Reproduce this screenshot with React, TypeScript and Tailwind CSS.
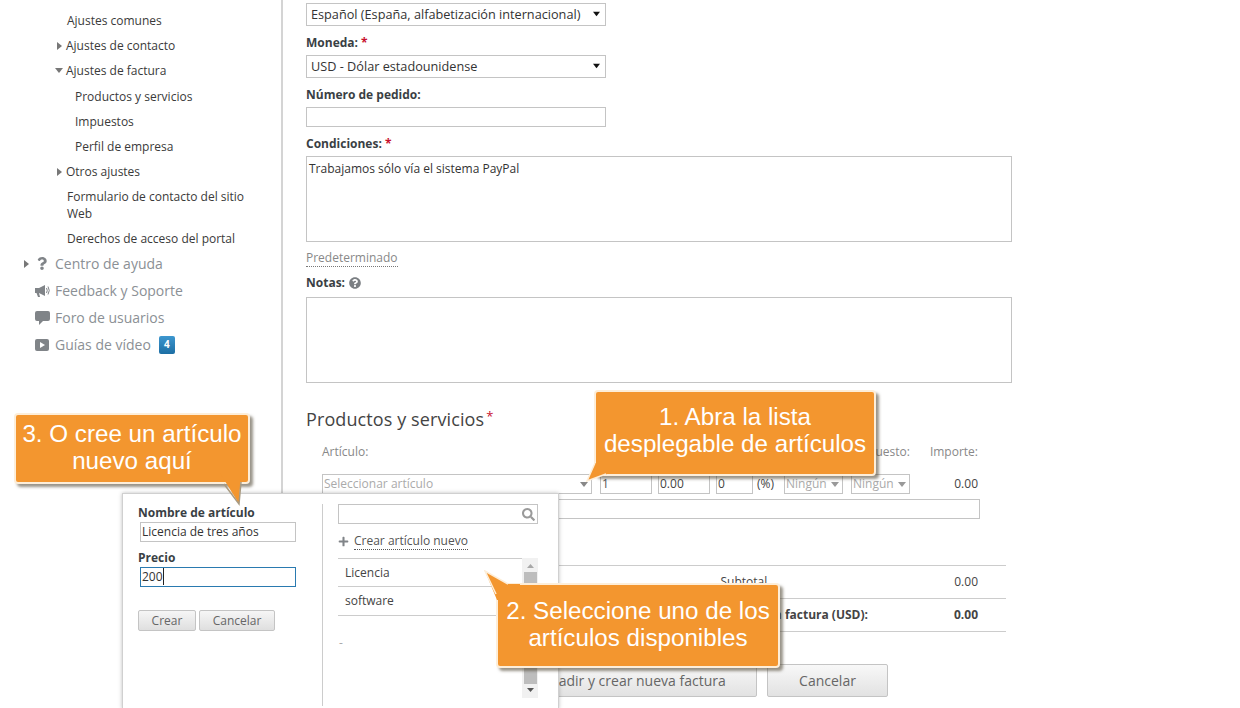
import type { ReactNode } from 'react'
import { FaPlus, FaQuestion, FaQuestionCircle, FaSearch } from 'react-icons/fa'

const font = { fontFamily: '"Open Sans", sans-serif' }

const SUB_ROW = 'h-[25px] leading-[25px] text-[12px] text-[#3a3a3a]'
const MAIN_ROW = 'flex items-center h-[27px] text-[14px] text-[#8b9095]'
const INPUT = 'border border-[#c4c4c4] bg-white'
const LABEL = 'text-[12px] font-bold text-[#3a3f44] leading-[17px]'

function ArrowRight({ color = '#777' }: { color?: string }) {
  return (
    <svg width="5" height="8" viewBox="0 0 5 8" className="shrink-0">
      <path d="M0 0 L5 4 L0 8 Z" fill={color} />
    </svg>
  )
}

function ArrowDown({ color = '#777', w = 8, h = 5 }: { color?: string; w?: number; h?: number }) {
  return (
    <svg width={w} height={h} viewBox="0 0 8 5" className="shrink-0">
      <path d="M0 0 L8 0 L4 5 Z" fill={color} />
    </svg>
  )
}

function Sidebar() {
  return (
    <div className="w-[283px] shrink-0 h-full border-r-2 border-[#d4d4d4] pt-[8px]">
      <div className={`${SUB_ROW} pl-[67px]`}>Ajustes comunes</div>
      <div className={`${SUB_ROW} pl-[57px] flex items-center gap-[4px]`}>
        <ArrowRight />
        <span>Ajustes de contacto</span>
      </div>
      <div className={`${SUB_ROW} pl-[55px] flex items-center gap-[3px]`}>
        <ArrowDown />
        <span>Ajustes de factura</span>
      </div>
      <div className={`${SUB_ROW} pl-[75px] mt-[1px]`}>Productos y servicios</div>
      <div className={`${SUB_ROW} pl-[75px]`}>Impuestos</div>
      <div className={`${SUB_ROW} pl-[75px]`}>Perfil de empresa</div>
      <div className={`${SUB_ROW} pl-[57px] flex items-center gap-[4px]`}>
        <ArrowRight />
        <span>Otros ajustes</span>
      </div>
      <div className="pl-[67px] pr-[30px] pt-[4px] pb-[4px] text-[12px] leading-[17px] text-[#3a3a3a]">
        Formulario de contacto del sitio Web
      </div>
      <div className={`${SUB_ROW} pl-[67px]`}>Derechos de acceso del portal</div>
      <div className="-mt-[1px]">
        <div className={`${MAIN_ROW} pl-[24px]`}>
          <ArrowRight />
          <span className="w-[10px] ml-[8px] flex justify-center"><FaQuestion size={13} color="#808488" /></span>
          <span className="ml-[8px]">Centro de ayuda</span>
        </div>
        <div className={`${MAIN_ROW} pl-[35px]`}>
          <svg width="15" height="14" viewBox="0 0 15 14" className="shrink-0">
            <path d="M0 4 H4 L10 1 V12 L4 9 L5 13 H3 L1.5 9 H0 Z" fill="#808488" />
            <path d="M11.5 4 Q13 6.5 11.5 9 M13 2.5 Q15.5 6.5 13 10.5" fill="none" stroke="#808488" />
          </svg>
          <span className="ml-[5px]">Feedback y Soporte</span>
        </div>
        <div className={`${MAIN_ROW} pl-[35px]`}>
          <svg width="15" height="14" viewBox="0 0 15 14" className="shrink-0">
            <path d="M2 0 H13 Q15 0 15 2 V8 Q15 10 13 10 H8 L4 14 V10 H2 Q0 10 0 8 V2 Q0 0 2 0 Z" fill="#808488" />
          </svg>
          <span className="ml-[5px]">Foro de usuarios</span>
        </div>
        <div className={`${MAIN_ROW} pl-[35px]`}>
          <span className="w-[14px] h-[12px] rounded-[2px] bg-[#808488] flex items-center justify-center">
            <svg width="5" height="6" viewBox="0 0 5 6"><path d="M0 0 L5 3 L0 6 Z" fill="#fff" /></svg>
          </span>
          <span className="ml-[6px]">Guías de vídeo</span>
          <span className="ml-[8px] w-[16px] h-[18px] rounded-[2px] bg-gradient-to-b from-[#3d97cf] to-[#1c6ea4] text-white text-[10px] font-bold flex items-center justify-center">4</span>
        </div>
      </div>
    </div>
  )
}

function SelectBox({ children }: { children: ReactNode }) {
  return (
    <div className={`${INPUT} w-[300px] h-[23px] flex items-center justify-between pl-[4px] pr-[4px] pt-[1px] text-[12.7px] text-[#333]`}>
      <span>{children}</span>
      <span className="mr-[1px] mb-[3px]"><ArrowDown color="#111" w={7} h={6} /></span>
    </div>
  )
}

function TaxSelect() {
  return (
    <div className={`${INPUT} w-[59px] h-[20px] flex items-center pl-[1px] gap-[4px] text-[12px] text-[#aaa]`}>
      Ningún
      <ArrowDown color="#999" />
    </div>
  )
}

function Form() {
  return (
    <div className="pl-[23px] flex-1">
      <div className="pt-[3px]">
        <SelectBox>Español (España, alfabetización internacional)</SelectBox>
      </div>
      <div className={`${LABEL} mt-[8px] mb-[4px]`}>Moneda: <span className="text-[#c8102e]">*</span></div>
      <SelectBox>USD - Dólar estadounidense</SelectBox>
      <div className={`${LABEL} mt-[8px] mb-[4px]`}>Número de pedido:</div>
      <div className={`${INPUT} w-[300px] h-[20px]`} />
      <div className={`${LABEL} mt-[8px] mb-[4px]`}>Condiciones: <span className="text-[#c8102e]">*</span></div>
      <div className={`${INPUT} w-[706px] h-[86px] px-[2px] py-[3px] text-[12px] leading-[17px] text-[#333]`}>
        Trabajamos sólo vía el sistema PayPal
      </div>
      <div className="mt-[7px] h-[17px] leading-[17px] text-[12px] text-[#888]">
        <span className="border-b border-dotted border-[#777]">Predeterminado</span>
      </div>
      <div className={`${LABEL} mt-[8px] mb-[6px] flex items-center gap-[4px]`}>
        Notas: <FaQuestionCircle size={12} color="#7b7f83" />
      </div>
      <div className={`${INPUT} w-[706px] h-[86px]`} />

      <div className="mt-[23px] h-[26px] leading-[26px] text-[18px] text-[#444] tracking-[0.1px]">
        Productos y servicios<span className="text-[#c8102e] text-[13px] align-top ml-[2px] leading-[20px]">*</span>
      </div>

      <div className="ml-[16px] w-[658px] mt-[11px]">
        <div className="flex h-[17px] leading-[17px] text-[12px] text-[#888] pr-[2px]">
          <span>Artículo:</span>
          <span className="ml-auto mr-[20px]">Impuesto:</span>
          <span>Importe:</span>
        </div>
        <div className="flex items-center mt-[14px] text-[12px] text-[#444] pr-[2px]">
          <div className={`${INPUT} w-[270px] h-[20px] flex items-center justify-between pl-[1px] pr-[3px] text-[#aaa]`}>
            Seleccionar artículo
            <ArrowDown color="#888" />
          </div>
          <div className={`${INPUT} w-[52px] h-[20px] ml-[8px] pl-[1px] leading-[18px] text-[#555]`}>1</div>
          <div className={`${INPUT} w-[52px] h-[20px] ml-[6px] pl-[1px] leading-[18px]`}>0.00</div>
          <div className={`${INPUT} w-[37px] h-[20px] ml-[6px] pl-[1px] leading-[18px]`}>0</div>
          <span className="ml-[4px] w-[27px]">(%)</span>
          <TaxSelect />
          <div className="ml-[8px]"><TaxSelect /></div>
          <span className="ml-auto">0.00</span>
        </div>
        <div className={`${INPUT} w-[658px] h-[20px] mt-[5px]`} />
      </div>

      <div className="w-[700px] mt-[46px] text-[12px] text-[#444]">
        <div className="h-[33px] border-t border-[#ccc] flex items-center justify-end pr-[28px]">
          <span className="mr-[187px]">Subtotal</span>
          <span>0.00</span>
        </div>
        <div className="h-[34px] border-t border-b border-[#ccc] flex items-center justify-end pr-[28px] font-bold">
          <span className="mr-[86px]">Total de la factura (USD):</span>
          <span>0.00</span>
        </div>
      </div>

      <div className="flex mt-[32px] ml-[204px] gap-[10px]">
        <div className="w-[247px] h-[33px] border border-[#c4c4c4] rounded-[2px] bg-gradient-to-b from-[#f8f8f8] to-[#e2e2e2] flex items-center justify-center text-[14px] text-[#666]">
          Añadir y crear nueva factura
        </div>
        <div className="w-[121px] h-[33px] border border-[#c4c4c4] rounded-[2px] bg-gradient-to-b from-[#f8f8f8] to-[#e2e2e2] flex items-center justify-center text-[14px] text-[#666]">
          Cancelar
        </div>
      </div>
    </div>
  )
}

function ItemPopup() {
  return (
    <div className="absolute left-[122px] top-[493px] w-[437px] h-[216px] bg-white border border-[#d0d0d0] shadow-[0_0_4px_rgba(0,0,0,0.25)] flex">
      <div className="w-[199px] h-full pl-[15px] pt-[10px] shrink-0">
        <div className={LABEL}>Nombre de artículo</div>
        <div className={`${INPUT} ml-[2px] mt-[1px] w-[156px] h-[20px] pl-[1px] leading-[17px] text-[12px] text-[#333]`}>Licencia de tres años</div>
        <div className={`${LABEL} mt-[7px]`}>Precio</div>
        <div className="ml-[2px] mt-[1px] w-[156px] h-[20px] border border-[#2a7ab0] pl-[1px] leading-[18px] text-[12px] text-[#333]">
          200<span className="border-l border-[#222]" />
        </div>
        <div className="flex gap-[3px] mt-[23px]">
          <div className="w-[58px] h-[21px] border border-[#c4c4c4] rounded-[2px] bg-gradient-to-b from-[#f6f6f6] to-[#dfdfdf] text-[12px] text-[#666] flex items-center justify-center">Crear</div>
          <div className="w-[76px] h-[21px] border border-[#c4c4c4] rounded-[2px] bg-gradient-to-b from-[#f6f6f6] to-[#dfdfdf] text-[12px] text-[#666] flex items-center justify-center">Cancelar</div>
        </div>
      </div>
      <div className="w-[216px] h-[202px] mt-[10px] border-l border-[#ccc] pl-[15px]">
        <div className={`${INPUT} w-[200px] h-[20px] flex items-center justify-end pr-[2px]`}>
          <FaSearch size={13} color="#9a9a9a" />
        </div>
        <div className="flex items-center mt-[7px] h-[20px] text-[12px] text-[#555]">
          <FaPlus size={11} color="#808488" />
          <span className="ml-[5px] border-b border-dotted border-[#555] leading-[16px]">Crear artículo nuevo</span>
        </div>
        <div className="flex mt-[7px] w-[200px]">
          <div className="flex-1 text-[12px] text-[#444]">
            <div className="h-[29px] leading-[27px] border-y border-[#ccc] pl-[7px]">Licencia</div>
            <div className="h-[29px] leading-[27px] border-b border-[#ccc] pl-[7px]">software</div>
            <div className="pl-[1px] mt-[20px] text-[#aaa] leading-[14px]">-</div>
          </div>
          <div className="w-[16px] h-[140px] bg-[#f1f1f1] flex flex-col items-center justify-between py-[6px]">
            <svg width="7" height="4" viewBox="0 0 7 4"><path d="M0 4 L7 4 L3.5 0 Z" fill="#a8a8a8" /></svg>
            <div className="w-[13px] flex-1 my-[4px] bg-[#bdbdbd]" />
            <svg width="7" height="4" viewBox="0 0 7 4"><path d="M0 0 L7 0 L3.5 4 Z" fill="#555" /></svg>
          </div>
        </div>
      </div>
    </div>
  )
}

function Callout({ className, textClass, tail, children }: { className: string; textClass: string; tail: ReactNode; children: ReactNode }) {
  return (
    <div className={`absolute ${className}`} style={{ fontFamily: '"Liberation Sans", Arial, sans-serif' }}>
      <div className="w-full h-full rounded-[4px] bg-[#f3962f] border-2 border-[#fdeed9] shadow-[3px_3px_3px_rgba(70,60,40,0.55)] flex items-center justify-center text-center text-white text-[24.2px] leading-[27px]">
        <div className={`whitespace-pre ${textClass}`}>{children}</div>
      </div>
      {tail}
    </div>
  )
}

export default function App() {
  return (
    <div className="relative w-[1240px] h-[708px] overflow-hidden bg-white flex" style={font}>
      <Sidebar />
      <Form />
      <ItemPopup />

      {/* tails are drawn over the callout body so the seam is hidden */}
      <Callout
        className="left-[594px] top-[390px] w-[282px] h-[86px]"
        textClass="pb-[7px]"
        tail={
          <svg className="absolute left-[-10px] top-[72px]" width="34" height="22" viewBox="0 0 34 22">
            <path d="M11 1 L3 19 L26 11 L26 1 Z" fill="#f3962f" />
            <path d="M11 1 L3 19 L22 12" fill="none" stroke="#fdeed9" strokeWidth="1.5" />
          </svg>
        }
      >
        {'1. Abra la lista\ndesplegable de artículos'}
      </Callout>

      <Callout
        className="left-[496px] top-[583px] w-[284px] h-[85px]"
        textClass="pb-[3px]"
        tail={
          <svg className="absolute left-[-12px] top-[-13px]" width="42" height="36" viewBox="0 0 42 36">
            <path d="M1 1 L24 14 L36 14 L36 30 L13 30 Z" fill="#f3962f" />
            <path d="M24 14 L1 1 L12 24" fill="none" stroke="#fdeed9" strokeWidth="1.5" />
          </svg>
        }
      >
        {'2. Seleccione uno de los\nartículos disponibles'}
      </Callout>

      <Callout
        className="left-[14px] top-[413px] w-[236px] h-[71px]"
        textClass="pb-[3px]"
        tail={
          <svg className="absolute left-[205px] top-[60px]" width="26" height="34" viewBox="0 0 26 34">
            <path d="M1 0 L22 0 L20 31 Z" fill="#f3962f" />
            <path d="M22 9 L20 31 L5 11" fill="none" stroke="#a99a80" strokeWidth="1.5" />
          </svg>
        }
      >
        {'3. O cree un artículo\nnuevo aquí'}
      </Callout>
    </div>
  )
}
